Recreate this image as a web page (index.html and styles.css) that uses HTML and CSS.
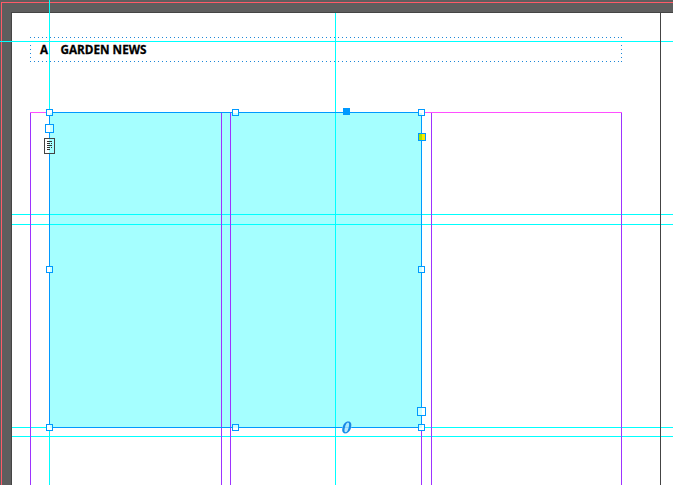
FILE: index.html
```
<!DOCTYPE html>
<html lang="en">
<head>
    <meta charset="UTF-8">
    <meta name="viewport" content="width=device-width, initial-scale=1.0">
    <title>Garden News</title>
    <link rel="stylesheet" href="styles.css">
</head>
<body>
    <svg class="pasteboard" width="673" height="485" viewBox="0 0 673 485">
        <!-- page -->
        <rect class="page-edge" x="11" y="12" width="662" height="473"/>
        <rect class="page" x="12" y="13" width="661" height="472"/>

        <!-- selected frame fill -->
        <rect class="frame-fill" x="49" y="112" width="373" height="316"/>

        <!-- bleed -->
        <path class="bleed" d="M1.5 485V2.5H673"/>

        <!-- header frame -->
        <path class="header-frame" d="M30 37.5H622M30 61.5H622M30.5 37V62M621.5 37V62"/>

        <!-- ruler guides -->
        <path class="guide" d="M49.5 0V485M335.5 13V485M0 41.5H673"/>
        <path class="guide" d="M12 214.5H673M12 224.5H673M12 427.5H673M12 436.5H673"/>

        <!-- margins and columns -->
        <path class="column" d="M30.5 112V485M221.5 112V485M230.5 112V485M421.5 112V485M431.5 112V485M621.5 112V485"/>
        <path class="margin" d="M30 112.5H622"/>
        <path class="spread" d="M660.5 12V485"/>

        <text class="header-text" x="40" y="54" textLength="8" lengthAdjust="spacingAndGlyphs">A</text>
        <text class="header-text" x="60.5" y="54" textLength="86" lengthAdjust="spacingAndGlyphs">GARDEN NEWS</text>

        <!-- selection -->
        <rect class="outline" x="49.5" y="112.5" width="372" height="315"/>

        <g class="handles">
            <rect x="46.5" y="109.5" width="6" height="6"/>
            <rect x="232.5" y="109.5" width="6" height="6"/>
            <rect x="418.5" y="109.5" width="6" height="6"/>
            <rect x="46.5" y="266.5" width="6" height="6"/>
            <rect x="418.5" y="266.5" width="6" height="6"/>
            <rect x="46.5" y="424.5" width="6" height="6"/>
            <rect x="232.5" y="424.5" width="6" height="6"/>
            <rect x="418.5" y="424.5" width="6" height="6"/>
            <!-- text ports -->
            <rect x="45.5" y="124.5" width="8" height="8"/>
            <rect x="417.5" y="407.5" width="8" height="8"/>
        </g>
        <g class="tint">
            <rect x="50" y="113" width="2" height="2"/>
            <rect x="233" y="113" width="5" height="2"/>
            <rect x="419" y="113" width="3" height="2"/>
            <rect x="50" y="267" width="2" height="5"/>
            <rect x="419" y="267" width="3" height="5"/>
            <rect x="50" y="425" width="2" height="3"/>
            <rect x="233" y="425" width="5" height="3"/>
            <rect x="419" y="425" width="3" height="3"/>
            <rect x="50" y="125" width="3" height="7"/>
            <rect x="418" y="408" width="4" height="7"/>
        </g>

        <rect class="anchor" x="343" y="108" width="7" height="7"/>
        <rect class="corner" x="418.5" y="133.5" width="7" height="7"/>
        <rect class="corner-tint" x="419" y="134" width="3" height="6"/>

        <!-- text frame badge -->
        <rect class="badge" x="44.5" y="138.5" width="10" height="15"/>
        <rect class="badge-tint" x="49" y="139" width="5" height="14"/>
        <path class="badge-lines" d="M47 141.5h5M47 143.5h3M51 143.5h1M47 145.5h5M47 147.5h3M51 147.5h1M47 149.5h3"/>

        <!-- link cursor -->
        <g transform="translate(346.8 427.4) skewX(-14)">
            <ellipse class="ring-glow" rx="4.6" ry="6.3"/>
            <path class="ring" d="M0 -5.8C2.9 -5.8 4.2 -3.2 4.2 0S2.9 5.8 0 5.8S-4.2 3.2 -4.2 0S-2.9 -5.8 0 -5.8ZM0 -4.8C-1.4 -4.8 -1.9 -2.6 -1.9 0S-1.4 4.8 0 4.8S1.9 2.6 1.9 0S1.4 -4.8 0 -4.8Z"/>
        </g>
    </svg>
</body>
</html>
```
FILE: styles.css
```
body {
    margin: 0;
    overflow: hidden;
    background-color: #5e5e5e;
}

.pasteboard {
    display: block;
    shape-rendering: crispEdges;
    fill: none;
}

.page-edge {
    fill: #444;
}

.page {
    fill: #fff;
}

.frame-fill {
    fill: #a5ffff;
}

.bleed {
    stroke: #ff5a68;
}

.header-frame {
    stroke: #1b87d8;
    stroke-dasharray: 1 3;
}

.guide {
    stroke: #00ffff;
}

.column {
    stroke: #9d33ff;
}

.margin {
    stroke: #ff4fff;
}

.spread {
    stroke: #444;
}

.header-text {
    font-family: "Open Sans", "Noto Sans", sans-serif;
    font-size: 12.5px;
    font-weight: bold;
    fill: #000;
    stroke: #000;
    stroke-width: 0.3;
}

.outline {
    stroke: #0099ff;
}

.handles rect {
    fill: #fff;
    stroke: #0099ff;
}

.tint {
    fill: #c8ffff;
}

.anchor {
    fill: #0099ff;
}

.corner {
    fill: #ffe600;
    stroke: #0099ff;
}

.corner-tint {
    fill: #a5e600;
}

.badge {
    fill: #fff;
    stroke: #444;
}

.badge-tint {
    fill: #a5ffff;
}

.badge-lines {
    stroke: #333;
}

.ring-glow {
    fill: #a9e4fb;
    opacity: 0.8;
    shape-rendering: auto;
}

.ring {
    fill: #1689e6;
    fill-rule: evenodd;
    shape-rendering: auto;
}
```
